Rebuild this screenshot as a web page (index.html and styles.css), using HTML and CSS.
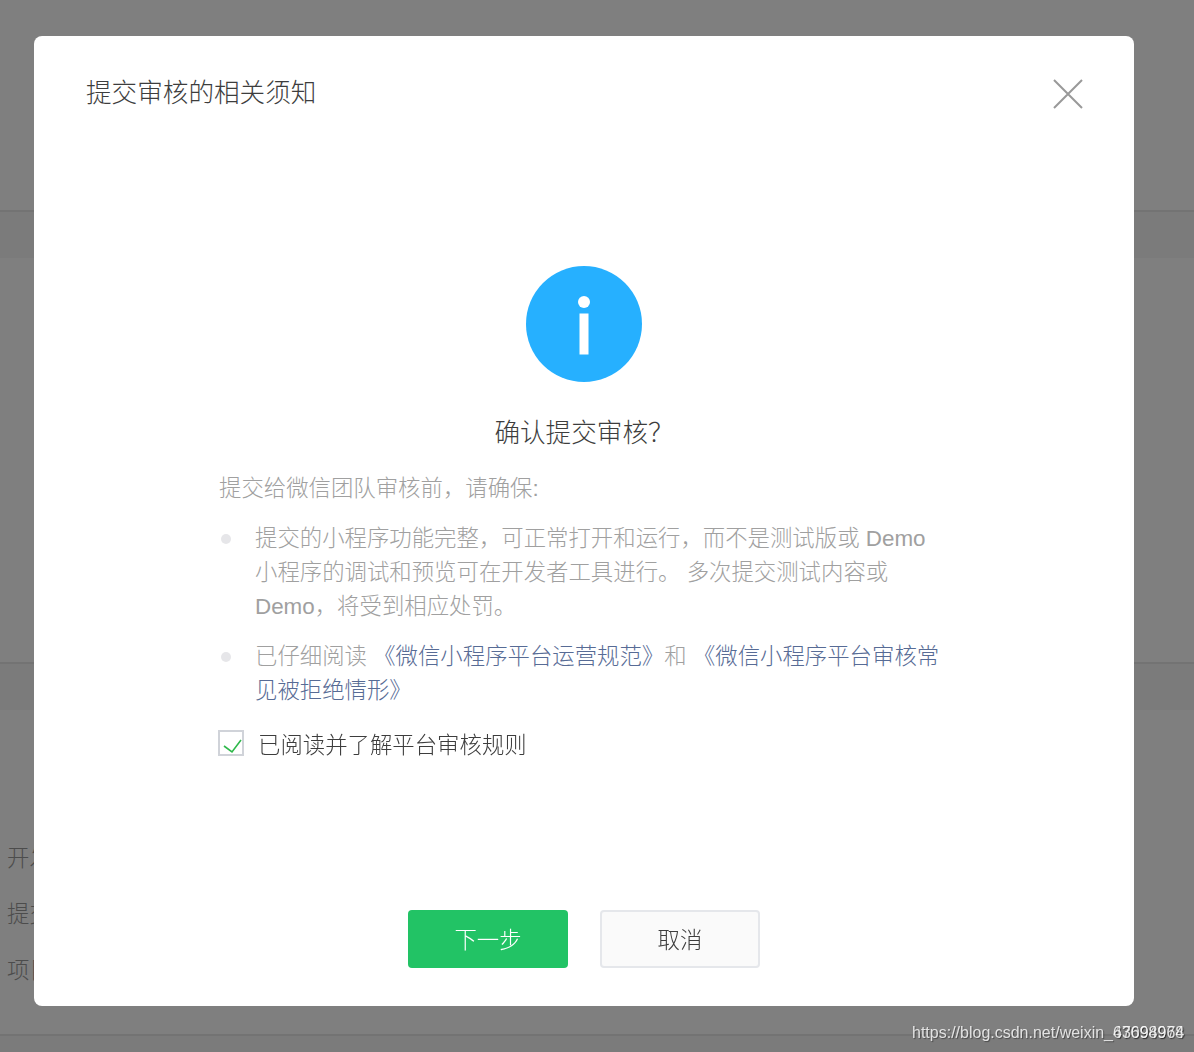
FILE: index.html
```html
<!DOCTYPE html>
<html lang="zh-CN">
<head>
<meta charset="utf-8">
<title>提交审核的相关须知</title>
<link rel="stylesheet" href="styles.css">
</head>
<body>
<div class="page">
  <section class="top-area"></section>
  <div class="band"></div>
  <section class="mid-area"></section>
  <div class="band"></div>
  <section class="info-area">
    <div class="info-row">开发版本</div>
    <div class="info-row">提交审核</div>
    <div class="info-row">项目备注</div>
  </section>
  <section class="bottom-area"></section>
</div>
<div class="mask">
  <div class="modal">
    <header class="modal-head">
      <h2 class="modal-title">提交审核的相关须知</h2>
      <button class="close" aria-label="关闭">
        <svg class="close-icon" viewBox="0 0 30 30"><path d="M1 1 L29 29 M29 1 L1 29"/></svg>
      </button>
    </header>
    <div class="modal-body">
      <svg class="info-icon" viewBox="0 0 116 116">
        <circle class="info-bg" cx="58" cy="58" r="58"/>
        <circle class="info-fg" cx="58" cy="36" r="6"/>
        <rect class="info-fg" x="53.5" y="47.5" width="9" height="41"/>
      </svg>
      <h3 class="question">确认提交审核？</h3>
      <div class="notice">
        <p class="intro">提交给微信团队审核前，请确保:</p>
        <ul class="rules">
          <li class="rule">提交的小程序功能完整，可正常打开和运行，而不是测试版或 Demo 小程序的调试和预览可在开发者工具进行。 多次提交测试内容或 Demo，将受到相应处罚。</li>
          <li class="rule">已仔细阅读 <a class="link">《微信小程序平台运营规范》</a>和 <a class="link">《微信小程序平台审核常见被拒绝情形》</a></li>
        </ul>
        <label class="agree">
          <span class="checkbox">
            <svg class="check" viewBox="0 0 22 22"><path d="M4 14 L12 20 L21 8"/></svg>
          </span>
          <span>已阅读并了解平台审核规则</span>
        </label>
      </div>
    </div>
    <footer class="modal-foot">
      <button class="btn btn-primary">下一步</button>
      <button class="btn btn-default">取消</button>
    </footer>
  </div>
</div>
<div class="watermark">https://blog.csdn.net/weixin_<span class="digits"><span>47094978</span><span class="digits-over">63698964</span></span></div>
</body>
</html>
```

FILE: styles.css
```css
* { box-sizing: border-box; }
html, body { margin: 0; height: 100%; }
body {
  font-family: "Liberation Sans", "Noto Sans CJK SC", sans-serif;
  font-weight: 300;
  background: #fff;
  color: #3d3d3d;
  overflow: hidden;
}
.page { height: 1052px; }
.top-area { height: 212px; border-bottom: 2px solid #e7e7e7; }
.band { height: 46px; background: #f6f6f6; }
.mid-area { height: 406px; border-bottom: 2px solid #e7e7e7; }
.info-area { height: 326px; padding-top: 121px; border-bottom: 2px solid #e7e7e7; background: #fff; }
.info-row { height: 56px; line-height: 56px; padding-left: 7px; font-size: 22.4px; color: #999; }
.bottom-area { height: 16px; background: #f6f6f6; }

.mask {
  position: fixed;
  inset: 0;
  background: rgba(0, 0, 0, .5);
  display: flex;
  justify-content: flex-start;
  align-items: flex-start;
  padding: 36px 0 0 34px;
}
.modal {
  width: 1100px;
  height: 970px;
  background: #fff;
  border-radius: 8px;
  display: flex;
  flex-direction: column;
  position: relative;
}
.modal-head { padding: 39px 52px 0; }
.modal-title { margin: 0; font-size: 25.6px; line-height: 36px; font-weight: 300; color: #3d3d3d; }
.close {
  position: absolute;
  top: 43px;
  right: 51px;
  width: 30px;
  height: 30px;
  padding: 0;
  border: 0;
  background: none;
}
.close-icon { display: block; width: 30px; height: 30px; }
.close-icon path { stroke: #999; stroke-width: 2; fill: none; }

.modal-body { padding-top: 155px; display: flex; flex-direction: column; align-items: center; }
.info-icon { display: block; width: 116px; height: 116px; }
.info-bg { fill: #26b0ff; }
.info-fg { fill: #fff; }
.question { margin: 33px 0 0; font-size: 25.6px; line-height: 36px; font-weight: 300; color: #3d3d3d; }
.notice { align-self: flex-start; margin: 21px 0 0 185px; width: 726px; font-size: 22.4px; line-height: 34px; color: #a0a0a0; }
.intro { margin: 0; }
.rules { list-style: none; margin: 16px 0 0; padding: 0; }
.rule { position: relative; padding-left: 36px; margin-bottom: 16px; }
.rule::before {
  content: "";
  position: absolute;
  left: 2px;
  top: 12px;
  width: 10px;
  height: 10px;
  border-radius: 50%;
  background: #e6e6e9;
}
.link { color: #576b95; }
.agree { display: flex; align-items: center; margin-top: 21px; color: #3d3d3d; }
.checkbox {
  width: 26px;
  height: 26px;
  margin: 0 14px 6px -1px;
  border: 2px solid #d0d3d9;
}
.check { display: block; width: 22px; height: 22px; }
.check path { stroke: #2eb84a; stroke-width: 1.6; fill: none; }

.modal-foot {
  margin-top: auto;
  padding-bottom: 38px;
  display: flex;
  justify-content: center;
  gap: 32px;
}
.btn {
  width: 160px;
  height: 58px;
  border-radius: 4px;
  font: inherit;
  font-size: 22.4px;
  padding: 0 0 2px;
}
.btn-primary { background: #22c365; border: 0; color: #fff; }
.btn-default { background: #fafafa; border: 2px solid #e5e7eb; color: #3d3d3d; }

.watermark {
  position: absolute;
  left: 912px;
  top: 1023px;
  font-size: 16px;
  font-weight: 400;
  line-height: 20px;
  white-space: nowrap;
  color: rgba(255, 255, 255, .8);
  text-shadow: 1px 1px 1px rgba(0, 0, 0, .4);
}
.digits { position: relative; display: inline-block; }
.digits-over { position: absolute; left: 0; top: 0; }
```
